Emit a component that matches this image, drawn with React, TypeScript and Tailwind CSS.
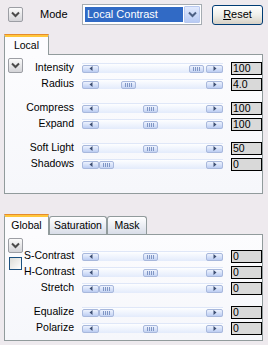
import React from "react";

const Chevron = ({ color = "#4b4b4b" }: { color?: string }) => (
  <svg width="9" height="7" viewBox="0 0 9 7">
    <polyline points="1,1.5 4.5,5 8,1.5" fill="none" stroke={color} strokeWidth="2" />
  </svg>
);

const ToggleBtn = () => (
  <div className="w-[15px] h-[15px] rounded-[2px] border border-[#9c9ea4] bg-gradient-to-b from-[#fbfbfb] to-[#d4d4d8] flex items-center justify-center">
    <Chevron />
  </div>
);

const Arrow = ({ dir }: { dir: "l" | "r" }) => (
  <div className="w-[17px] h-[8px] rounded-[2px] border border-[#a8b8dc] bg-gradient-to-b from-[#eef3fe] to-[#bccdf2] flex items-center justify-center">
    <svg width="4" height="5" viewBox="0 0 4 5">
      {dir === "l" ? (
        <polygon points="3.5,0 0.5,2.5 3.5,5" fill="#3d4e72" />
      ) : (
        <polygon points="0.5,0 3.5,2.5 0.5,5" fill="#3d4e72" />
      )}
    </svg>
  </div>
);

const Thumb = () => (
  <div className="w-[15px] h-[8px] rounded-[2px] border border-[#a8b8dc] bg-gradient-to-b from-[#eef3fe] to-[#c4d3f3] flex items-center justify-center gap-[1px]">
    <div className="w-[1px] h-[4px] bg-[#8096c4]" />
    <div className="w-[1px] h-[4px] bg-[#8096c4]" />
    <div className="w-[1px] h-[4px] bg-[#8096c4]" />
    <div className="w-[1px] h-[4px] bg-[#8096c4]" />
  </div>
);

const Slider = ({ pos }: { pos: number }) => (
  <div className="w-[141px] h-[10px] flex items-center border-t border-[#dfe7f8] bg-gradient-to-b from-[#fdfeff] to-[#e3ebfb]">
    <Arrow dir="l" />
    <div className="flex-1 relative h-full">
      <div className="absolute top-[1px]" style={{ left: pos }}>
        <Thumb />
      </div>
    </div>
    <Arrow dir="r" />
  </div>
);

type Row = { label: string; value: string; pos: number; gapBefore?: boolean };

const Rows = ({ rows }: { rows: Row[] }) => (
  <div className="flex flex-col">
    {rows.map((r) => (
      <div
        key={r.label}
        className={"flex items-center h-[16px] " + (r.gapBefore ? "mt-[8px]" : "")}
      >
        <div className="w-[53px] text-right pr-[3px] whitespace-nowrap text-black">{r.label}</div>
        <div className="ml-[5px]">
          <Slider pos={r.pos} />
        </div>
        <div className="ml-[8px] w-[31px] h-[13px] border border-black bg-[#d9d9d9] leading-[11px] pl-[1px] text-black">
          {r.value}
        </div>
      </div>
    ))}
  </div>
);

const localRows: Row[] = [
  { label: "Intensity", value: "100", pos: 90 },
  { label: "Radius", value: "4.0", pos: 22 },
  { label: "Compress", value: "100", pos: 44, gapBefore: true },
  { label: "Expand", value: "100", pos: 44 },
  { label: "Soft Light", value: "50", pos: 44, gapBefore: true },
  { label: "Shadows", value: "0", pos: 0 },
];

const globalRows: Row[] = [
  { label: "S-Contrast", value: "0", pos: 44 },
  { label: "H-Contrast", value: "0", pos: 44 },
  { label: "Stretch", value: "0", pos: 0 },
  { label: "Equalize", value: "0", pos: 0, gapBefore: true },
  { label: "Polarize", value: "0", pos: 44 },
];

const ActiveTab = ({ label, w }: { label: string; w: number }) => (
  <div
    className="relative z-10 h-[21px] -mb-[1px] bg-[#fcfcfe] border-x border-[#919b9c] rounded-t-[3px] flex flex-col"
    style={{ width: w }}
  >
    <div className="h-[1px] bg-[#e68b2c] rounded-t-[3px] -mx-[1px]" />
    <div className="h-[2px] bg-[#ffc73c]" />
    <div className="flex-1 flex items-center justify-center leading-none pb-[2px]">{label}</div>
  </div>
);

const Tab = ({ label, w }: { label: string; w: number }) => (
  <div
    className="h-[18px] border-t border-x border-[#919b9c] rounded-t-[3px] bg-gradient-to-b from-[#ffffff] to-[#d8dde8] flex items-center justify-center leading-none"
    style={{ width: w }}
  >
    {label}
  </div>
);

export default function App() {
  return (
    <div
      className="w-[268px] h-[345px] bg-[#eeeaee] text-[10.5px] text-black overflow-hidden"
      style={{ fontFamily: '"Liberation Sans", Arial, sans-serif' }}
    >
      {/* Top row */}
      <div className="flex items-center h-[21px] mt-[4px]">
        <div className="ml-[8px]">
          <ToggleBtn />
        </div>
        <div className="ml-[17px] w-[42px] text-[11px]">Mode</div>
        <div className="w-[120px] h-[21px] border border-[#a5acb2] bg-white flex items-center p-[1px]">
          <div className="flex-1 h-[15px] ml-[1px] bg-[#316ac5] text-white text-[11px] leading-[15px] pl-[2px]">
            Local Contrast
          </div>
          <div className="w-[16px] h-[17px] ml-[1px] rounded-[1px] border border-[#b9c9ef] bg-gradient-to-b from-[#e2eafd] to-[#b8cbf4] flex items-center justify-center">
            <Chevron color="#4d6185" />
          </div>
        </div>
        <div className="ml-[10px] w-[51px] h-[20px] rounded-[3px] border border-[#003c74] bg-gradient-to-b from-[#ffffff] via-[#f0f0ea] to-[#d6d0c5] flex items-center justify-center text-[11px]">
          <span>
            <span className="underline">R</span>eset
          </span>
        </div>
      </div>

      {/* Local tab group */}
      <div className="ml-[4px] mt-[8px]">
        <div className="flex items-end h-[21px]">
          <ActiveTab label="Local" w={45} />
        </div>
        <div className="w-[259px] h-[140px] border border-[#919b9c] bg-gradient-to-b from-[#fcfcfe] to-[#f6f7fb] flex">
          <div className="w-[19px] pl-[3px] pt-[3px]">
            <ToggleBtn />
          </div>
          <div className="pt-[5px]">
            <Rows rows={localRows} />
          </div>
        </div>
      </div>

      {/* Global tab group */}
      <div className="ml-[4px] mt-[19px]">
        <div className="flex items-end h-[21px]">
          <ActiveTab label="Global" w={45} />
          <Tab label="Saturation" w={58} />
          <Tab label="Mask" w={40} />
        </div>
        <div className="w-[259px] h-[107px] border border-[#919b9c] bg-gradient-to-b from-[#fcfcfe] to-[#f6f7fb] flex">
          <div className="w-[19px] pl-[3px] pt-[3px] flex flex-col">
            <ToggleBtn />
            <div className="ml-[1px] mt-[4px] w-[13px] h-[13px] border border-[#1c5180] bg-gradient-to-br from-[#dcdcd7] to-[#ffffff]" />
          </div>
          <div className="pt-[13px]">
            <Rows rows={globalRows} />
          </div>
        </div>
      </div>
    </div>
  );
}
